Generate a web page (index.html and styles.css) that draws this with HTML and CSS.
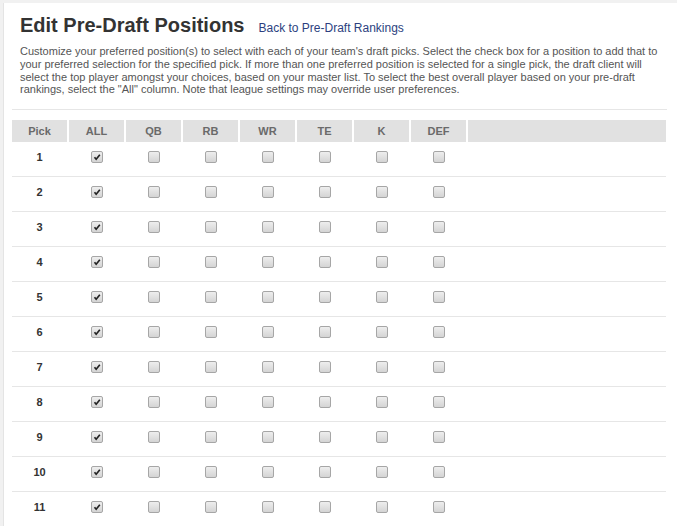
FILE: index.html
```html
<!DOCTYPE html>
<html>
<head>
<meta charset="utf-8">
<link rel="stylesheet" href="styles.css">
</head>
<body>
<div class="page">
  <div class="titlebar">
    <h1 class="title">Edit Pre-Draft Positions</h1>
    <a class="back" href="#">Back to Pre-Draft Rankings</a>
  </div>
  <p class="intro">Customize your preferred position(s) to select with each of your team's draft picks. Select the check box for a position to add that to your preferred selection for the specified pick. If more than one preferred position is selected for a single pick, the draft client will select the top player amongst your choices, based on your master list. To select the best overall player based on your pre-draft rankings, select the "All" column. Note that league settings may override user preferences.</p>
  <div class="grid">
    <div class="head">
      <div class="hc">Pick</div><div class="hc">ALL</div><div class="hc">QB</div><div class="hc">RB</div><div class="hc">WR</div><div class="hc">TE</div><div class="hc">K</div><div class="hc">DEF</div><div class="hc fill"></div>
    </div>
    <div id="rows"></div>
  </div>
</div>
<script src="script.js"></script>
</body>
</html>
```

FILE: script.js
```js
var rows = document.getElementById('rows');
var html = '';
var check = '<svg viewBox="0 0 12 12" width="12" height="12"><path d="M3 6.2 L5 8.6 L9.4 3.2" fill="none" stroke="#222" stroke-width="2"/></svg>';
for (var i = 1; i <= 11; i++) {
  html += '<div class="row"><div class="c num">' + i + '</div>';
  for (var j = 0; j < 7; j++) {
    html += '<div class="c"><span class="cb' + (j === 0 ? ' on' : '') + '">' + (j === 0 ? check : '') + '</span></div>';
  }
  html += '<div class="c fill"></div></div>';
}
rows.innerHTML = html;
```

FILE: styles.css
```css
html, body { margin: 0; padding: 0; }
body {
  background: #f1f1f1;
  font-family: "Liberation Sans", Arial, sans-serif;
  width: 677px;
  height: 526px;
  overflow: hidden;
}
.page {
  background: #fff;
  margin: 3px 0 0 3px;
  border-left: 1px solid #e4e4e4;
  padding: 0 10px 0 8px;
  height: 600px;
}
.titlebar {
  display: flex;
  align-items: baseline;
  padding: 10px 0 0 8px;
  height: 32px;
}
.title {
  margin: 0;
  font-size: 20px;
  font-weight: bold;
  color: #333;
  line-height: 24px;
}
.back {
  margin-left: 14px;
  font-size: 12px;
  color: #2c3f80;
  text-decoration: none;
}
.intro {
  margin: 0;
  padding: 0 0 13px 8px;
  font-size: 11px;
  line-height: 12.8px;
  color: #555;
  border-bottom: 1px solid #e6e6e6;
}
.grid { margin-top: 10px; width: 654px; }
.head {
  display: flex;
  gap: 2px;
  height: 22px;
}
.hc {
  width: 55px;
  background: #e1e1e1;
  color: #6a6a6a;
  font-size: 11px;
  font-weight: bold;
  display: flex;
  align-items: center;
  justify-content: center;
}
.fill { flex: 1; }
.hc.fill { width: auto; }
.row {
  display: flex;
  gap: 2px;
  height: 34px;
  border-bottom: 1px solid #e6e6e6;
}
.c {
  width: 55px;
  display: flex;
  align-items: center;
  justify-content: center;
  padding-bottom: 5px;
  box-sizing: border-box;
}
.c.fill { width: auto; }
.num { font-size: 11px; font-weight: bold; color: #333; padding-bottom: 4px; }
.cb {
  width: 12px;
  height: 12px;
  box-sizing: border-box;
  border: 1px solid #a6a6a6;
  border-radius: 2px;
  background: linear-gradient(#eeeeee, #d4d4d4);
  display: inline-flex;
  align-items: center;
  justify-content: center;
}
.cb svg { width: 10px; height: 10px; }
```
